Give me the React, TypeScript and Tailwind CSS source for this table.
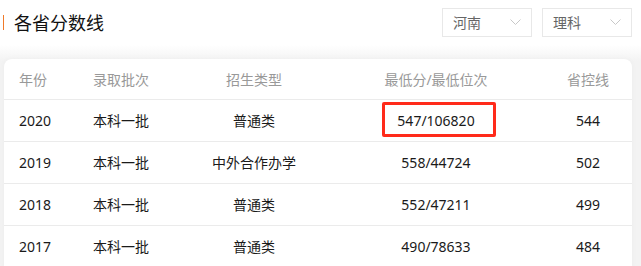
import React from "react";

const rows = [
  { year: "2020", batch: "本科一批", type: "普通类", score: "547/106820", line: "544", mark: true },
  { year: "2019", batch: "本科一批", type: "中外合作办学", score: "558/44724", line: "502" },
  { year: "2018", batch: "本科一批", type: "普通类", score: "552/47211", line: "499" },
  { year: "2017", batch: "本科一批", type: "普通类", score: "490/78633", line: "484" },
];

const font = { fontFamily: '"Noto Sans", "Noto Sans CJK SC", sans-serif' };

function Select({ label }: { label: string }) {
  return (
    <div className="flex h-[29px] w-[90px] items-center justify-between border border-[#e8e8e8] bg-white pl-[10px] pr-[10px]">
      <span className="text-[14px] text-[#666]">{label}</span>
      <svg width="11" height="7" viewBox="0 0 11 7" fill="none">
        <path d="M0.5 0.5L5.5 5.5L10.5 0.5" stroke="#c8c8c8" strokeWidth="1" />
      </svg>
    </div>
  );
}

export default function App() {
  return (
    <div className="h-[266px] w-[641px] overflow-hidden bg-white" style={font}>
      <div className="flex h-[45px] items-center justify-between pl-[3px] pr-[9px]">
        <div className="flex items-center">
          <div className="h-[15px] w-px bg-[#f07a2a]" />
          <span className="ml-[10px] text-[18px] leading-none text-[#111]">各省分数线</span>
        </div>
        <div className="flex items-center gap-[10px]">
          <Select label="河南" />
          <Select label="理科" />
        </div>
      </div>
      <div className="h-[221px] bg-[linear-gradient(to_bottom,#ffffff,#f3f3f3_16px)] pl-[4px] pr-[9px] pt-[14px]">
        <div className="relative rounded-t-[8px] bg-white shadow-[0_0_6px_rgba(0,0,0,0.03)]">
          <div className="grid h-[41px] grid-cols-[58px_118px_148px_216px_88px] items-center border-b border-[#ebebeb] text-[14px] text-[#999]">
            <div className="pl-[15px]">年份</div>
            <div className="text-center">录取批次</div>
            <div className="text-center">招生类型</div>
            <div className="text-center">最低分/最低位次</div>
            <div className="text-center">省控线</div>
          </div>
          {rows.map((r) => (
            <div
              key={r.year}
              className="grid h-[42px] grid-cols-[58px_118px_148px_216px_88px] items-center border-b border-[#ebebeb] text-[14px] text-[#1a1a1a]"
            >
              <div className="pl-[15px]">{r.year}</div>
              <div className="text-center">{r.batch}</div>
              <div className="text-center">{r.type}</div>
              <div className="relative text-center">
                {r.score}
                {r.mark && (
                  <div className="absolute left-[54px] top-[-8px] h-[35px] w-[114px] rounded-[2px] border-[3px] border-[#ff2a1a]" />
                )}
              </div>
              <div className="text-center">{r.line}</div>
            </div>
          ))}
        </div>
      </div>
    </div>
  );
}
